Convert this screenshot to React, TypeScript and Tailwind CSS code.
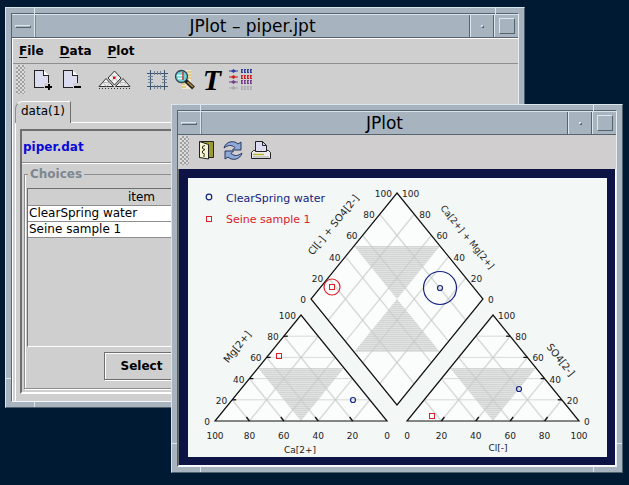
import type { ReactNode } from "react";

const LEVELS = [20, 40, 60, 80];
const SCALE = [0, 20, 40, 60, 80, 100];
const BLUE = "#14247e";
const RED = "#d9222c";

type Point = [number, number];

// point at t (0..1) between a and b
function mix(a: Point, b: Point, t: number): Point {
  return [a[0] + (b[0] - a[0]) * t, a[1] + (b[1] - a[1]) * t];
}

function Line({ from, to, ...rest }: { from: Point; to: Point; stroke?: string; strokeWidth?: number }) {
  return <line x1={from[0]} y1={from[1]} x2={to[0]} y2={to[1]} {...rest} />;
}

function Circle({ at, r, color }: { at: Point; r: number; color: string }) {
  return <circle cx={at[0]} cy={at[1]} r={r} fill="none" stroke={color} strokeWidth={1.2} />;
}

function Box({ at, color }: { at: Point; color: string }) {
  return <rect x={at[0] - 2.5} y={at[1] - 2.5} width={5} height={5} fill="none" stroke={color} />;
}

function Ternary({ left, side }: { left: Point; side: "left" | "right" }) {
  const right: Point = [left[0] + 172, left[1]];
  const apex: Point = [left[0] + 86, left[1] - 106];
  const outer = side === "left" ? left : right;
  const inner = side === "left" ? right : left;
  const dir = side === "left" ? 1 : -1;

  return (
    <g>
      <polygon points={`${left} ${right} ${apex}`} fill="#fbfcfc" />
      <polygon points={`${mix(left, apex, 0.5)} ${mix(right, apex, 0.5)} ${mix(left, right, 0.5)}`} fill="url(#hatch)" />
      <g stroke="#c9cbcb" strokeOpacity={0.7}>
        {LEVELS.map((level) => {
          const t = level / 100;
          return (
            <g key={level}>
              <Line from={mix(left, apex, t)} to={mix(right, apex, t)} />
              <Line from={mix(left, apex, t)} to={mix(left, right, t)} strokeWidth={1.5} />
              <Line from={mix(right, apex, t)} to={mix(right, left, t)} strokeWidth={1.5} />
            </g>
          );
        })}
      </g>
      <polygon points={`${left} ${right} ${apex}`} fill="none" stroke="#111" strokeWidth={1.2} />
      <g stroke="#111" strokeWidth={1.3}>
        {LEVELS.map((level) => {
          const edge = mix(outer, apex, level / 100);
          const base = mix(left, right, level / 100);
          return (
            <g key={level}>
              <Line from={edge} to={[edge[0] + 4 * dir, edge[1]]} />
              <Line from={base} to={[base[0] - 3 * dir, base[1] - 4]} />
            </g>
          );
        })}
      </g>
      {SCALE.map((level) => {
        const edge = mix(outer, apex, level / 100);
        const base = mix(inner, outer, level / 100);
        return (
          <g key={level}>
            <text x={edge[0] - 5 * dir} y={edge[1] + 4} textAnchor={side === "left" ? "end" : "start"}>
              {level}
            </text>
            <text x={base[0]} y={base[1] + 18} textAnchor="middle">
              {level}
            </text>
          </g>
        );
      })}
    </g>
  );
}

function Diamond() {
  const top: Point = [209, 15];
  const left: Point = [123, 121];
  const right: Point = [295, 121];
  const bottom: Point = [209, 227];

  return (
    <g>
      <polygon points={`${top} ${right} ${bottom} ${left}`} fill="#fbfcfc" />
      <polygon points="166,68 252,68 209,121" fill="url(#hatch)" />
      <polygon points="166,174 252,174 209,121" fill="url(#hatch)" />
      <g stroke="#c9cbcb" strokeOpacity={0.7} strokeWidth={1.5}>
        {LEVELS.map((level) => (
          <g key={level}>
            <Line from={mix(left, top, level / 100)} to={mix(bottom, right, level / 100)} />
            <Line from={mix(right, top, level / 100)} to={mix(bottom, left, level / 100)} />
          </g>
        ))}
      </g>
      <polygon points={`${top} ${right} ${bottom} ${left}`} fill="none" stroke="#111" strokeWidth={1.2} />
      {SCALE.map((level) => {
        const l = mix(left, top, level / 100);
        const r = mix(right, top, level / 100);
        return (
          <g key={level}>
            <text x={l[0] - 5} y={l[1] + 4} textAnchor="end">
              {level}
            </text>
            <text x={r[0] + 5} y={r[1] + 4}>
              {level}
            </text>
          </g>
        );
      })}
    </g>
  );
}

function PiperPlot() {
  return (
    <svg viewBox="0 0 419 279" className="h-full w-full text-[9px]" fill="#222" role="img" aria-label="Piper diagram">
      <defs>
        <pattern id="hatch" width="4" height="2" patternUnits="userSpaceOnUse">
          <rect width="4" height="2" fill="#e0e3e2" />
          <rect width="4" height="1" fill="#d2d5d4" />
        </pattern>
      </defs>
      <Diamond />
      <Ternary left={[27, 243]} side="left" />
      <Ternary left={[219, 243]} side="right" />

      <text x={112} y={275} textAnchor="middle">Ca[2+]</text>
      <text x={310} y={273} textAnchor="middle">Cl[-]</text>
      <g textAnchor="middle" className="text-[10px]">
        <text transform="translate(52 171) rotate(-51)">Mg[2+]</text>
        <text transform="translate(370 184) rotate(51)">SO4[2-]</text>
        <text transform="translate(148 49) rotate(-51)">Cl[-] + SO4[2-]</text>
      </g>
      <text transform="translate(277 61) rotate(51)" textAnchor="middle">Ca[2+] + Mg[2+]</text>

      <Circle at={[21, 19]} r={2.8} color={BLUE} />
      <text x={38} y={24} fill={BLUE} className="text-[11px]">ClearSpring water</text>
      <Box at={[21, 41]} color={RED} />
      <text x={38} y={45} fill={RED} className="text-[11px]">Seine sample 1</text>

      <Circle at={[252, 110]} r={16.5} color={BLUE} />
      <Circle at={[252, 110]} r={2.5} color={BLUE} />
      <Circle at={[165, 222]} r={2.5} color={BLUE} />
      <Circle at={[331, 211]} r={2.5} color={BLUE} />
      <Circle at={[144, 109]} r={8} color={RED} />
      <Box at={[144, 109]} color={RED} />
      <Box at={[91, 178]} color={RED} />
      <Box at={[244, 238]} color={RED} />
    </svg>
  );
}

function PageIcon({ sign }: { sign: "plus" | "minus" }) {
  return (
    <svg viewBox="0 0 20 22" className="h-[22px] w-5" shapeRendering="crispEdges">
      <path d="M1.500 1.500H10.500L15.500 6.500V18.500H1.500Z" fill="#dcdcf0" stroke="#222" />
      <path d="M10.500 1.500V6.500H15.500" fill="#fff" stroke="#222" />
      <path d="M11 14h8v7h-8z" fill="#cfcfcf" />
      <path d="M12 17h7v2h-7z" fill="#000" />
      {sign === "plus" && <path d="M14.500 15h2v6h-2z" fill="#000" />}
    </svg>
  );
}

function PiperIcon() {
  return (
    <svg viewBox="0 0 33 20" className="h-5 w-[33px]" fill="#eee" stroke="#333">
      <path d="M16.500 1L23 8L16.500 15L10 8Z" />
      <path d="M1 16.500L8 8.500L15.500 16.500Z" />
      <path d="M17.500 16.500L25 8.500L32 16.500Z" />
      <path d="M13 4.500L20 11.500M20 4.500L13 11.500M5 12.500H12L8.500 16.500ZM21.500 12.500H28.500L25 16.500Z" fill="none" stroke="#999" strokeWidth="0.6" />
      <path d="M1 18.500H32" strokeDasharray="1 2" />
      <path d="M15 6.500h2.500v2.500h-2.500z" fill="#d11" stroke="none" />
    </svg>
  );
}

function GridIcon() {
  return (
    <svg viewBox="0 0 21 22" className="h-[22px] w-[21px]" fill="none" stroke="#3c5470" shapeRendering="crispEdges">
      <path d="M3.500 1V21M17.500 1V21M0 4.500H21M0 17.500H21" />
      <path d="M1 7.500H6M1 10.500H6M1 13.500H6M15 7.500H20M15 10.500H20M15 13.500H20M7.500 2V6M10.500 2V6M13.500 2V6M7.500 16V20M10.500 16V20M13.500 16V20" stroke="#6d8096" />
    </svg>
  );
}

function ZoomIcon() {
  return (
    <svg viewBox="0 0 22 22" className="h-[22px] w-[22px]">
      <path d="M8 1H17V20H8Z" fill="#f0ead2" />
      <path d="M13 3H17M14 6H17M14 9H17M8 15H11M8 18H12" stroke="#cba83a" />
      <circle cx="7.500" cy="7.500" r="6" fill="#6fd3d6" stroke="#345" strokeWidth="1.300" />
      <path d="M3 6.500H10M4 9.500H8" stroke="#e8ffff" strokeWidth="1.500" />
      <path d="M9 3V11" stroke="#c03a3a" strokeWidth="1.500" />
      <path d="M11.500 11.500L19.500 19" stroke="#222" strokeWidth="4" />
      <path d="M13.500 13L19 18" stroke="#b9893c" strokeWidth="1.500" />
    </svg>
  );
}

function SeriesIcon() {
  const rows = [
    { y: 3, color: "#2c3fa0" },
    { y: 9, color: "#d32020" },
    { y: 14, color: "#74408c" },
    { y: 20, color: "#aaa9b4" },
  ];
  return (
    <svg viewBox="0 0 26 23" className="h-[23px] w-[26px]">
      {rows.map((row) => (
        <g key={row.y} fill={row.color} stroke={row.color}>
          <path d={`M1 ${row.y}H10`} />
          <path d={`M5.500 ${row.y - 2}L8 ${row.y}L5.500 ${row.y + 2}L3 ${row.y}Z`} stroke="none" />
          <path d={`M13 ${row.y}H25`} strokeWidth="4" strokeDasharray="2 1" />
          <path d={`M14 ${row.y}H25`} stroke="#cfcfcf" strokeDasharray="1 2" />
        </g>
      ))}
    </svg>
  );
}

function CloseIcon() {
  return (
    <svg viewBox="0 0 17 20" className="h-5 w-[17px]" stroke="#222">
      <path d="M1.500 1.500H15.500V17.500H1.500Z" fill="#9a9a30" />
      <path d="M1.500 1.500L10.500 4.500V19L1.500 17.500Z" fill="#f6f5cf" />
      <path d="M7 5.500L4.500 6.500V8.500L7 9.500L4.500 11V13L7 14.500M5 16H7" fill="none" />
    </svg>
  );
}

function RefreshIcon() {
  const arrow = "M2 8C4 1 12 0 16 4L19 2V10H10.500L13 7.500C9 4.500 6 5 2 8Z";
  return (
    <svg viewBox="0 0 22 21" className="h-[21px] w-[22px]" fill="#8ea8d8" stroke="#26365e">
      <path d={arrow} />
      <path d={arrow} transform="rotate(180 11 10.500)" />
    </svg>
  );
}

function PrintIcon() {
  return (
    <svg viewBox="0 0 20 20" className="h-5 w-5" stroke="#222">
      <path d="M4.500 11.500V1.500H11.500L15.500 5.500V11.500Z" fill="#dcdcf2" />
      <path d="M11.500 1.500V5.500H15.500" fill="none" />
      <path d="M2.500 10.500H4.500V11.500H15.500V10.500H17.500L19.500 12.500V18.500H0.500V12.500Z" fill="#ececec" />
      <path d="M2 14.500H13" stroke="#b8b62c" strokeWidth="1.500" />
      <path d="M2 17H18" stroke="#aaa" />
    </svg>
  );
}

function ToolButton({ label, children }: { label: string; children: ReactNode }) {
  return (
    <button type="button" aria-label={label} className="flex items-center justify-center">
      {children}
    </button>
  );
}

function Grip() {
  return <span className="mr-2 h-[29px] w-[9px] bg-[repeating-conic-gradient(#a0a0a0_0_25%,#dcdcdc_0_50%)] bg-[length:4px_4px]" />;
}

function DesktopWindow({ title, className, children }: { title: string; className: string; children: ReactNode }) {
  return (
    <section className={`absolute flex border border-t-[#d6e6ec] border-r-[#4d606c] border-b-[#4d606c] border-l-[#d6e6ec] bg-[#a7b4c0] p-[5px] ${className}`}>
      <span className="absolute top-0 left-[28px] h-[6px] w-px bg-[#dbe9ee]" />
      <span className="absolute top-0 right-[28px] h-[6px] w-px bg-[#dbe9ee]" />
      <span className="absolute bottom-0 left-[28px] h-[5px] w-px bg-[#dbe9ee]" />
      <span className="absolute right-[28px] bottom-0 h-[5px] w-px bg-[#dbe9ee]" />
      <span className="absolute bottom-[28px] left-0 h-px w-[5px] bg-[#dbe9ee]" />
      <span className="absolute right-0 bottom-[28px] h-px w-[5px] bg-[#dbe9ee]" />
      <div className="flex min-w-0 flex-1 flex-col border border-t-[#56646f] border-r-[#e6eef2] border-b-[#f4f8fa] border-l-[#56646f]">
        <header className="flex h-6 shrink-0 items-stretch border-t border-b border-t-[#d6e6ec] border-b-[#56646f]">
          <button type="button" aria-label="Window menu" className="flex w-[23px] items-center justify-center border-r border-r-[#dbe9ee]">
            <span className="h-[3px] w-4 border border-t-[#dbe9ee] border-r-[#56646f] border-b-[#56646f] border-l-[#dbe9ee]" />
          </button>
          <h1 className="flex flex-1 items-center justify-center border-r border-l border-r-[#56646f] border-l-[#7b8995] text-[17px] leading-5 text-black">{title}</h1>
          <button type="button" aria-label="Minimize" className="flex w-6 items-center justify-center border-r border-l border-r-[#56646f] border-l-[#dbe9ee]">
            <span className="h-[3px] w-[3px] border border-t-[#dbe9ee] border-r-[#56646f] border-b-[#56646f] border-l-[#dbe9ee]" />
          </button>
          <button type="button" aria-label="Maximize" className="flex w-6 items-center justify-center border-l border-l-[#dbe9ee]">
            <span className="h-4 w-4 border border-t-[#dbe9ee] border-r-[#56646f] border-b-[#56646f] border-l-[#dbe9ee]" />
          </button>
        </header>
        {children}
      </div>
    </section>
  );
}

function MainWindow() {
  const items = ["ClearSpring water", "Seine sample 1"];

  return (
    <DesktopWindow title="JPlot – piper.jpt" className="top-[7px] right-[104px] bottom-[77px] left-[5px]">
      <div className="flex min-h-0 flex-1 flex-col border-t border-l border-white bg-[#cfcfcf]">
        <nav className="flex h-[25px] shrink-0 items-center gap-4 border-b border-[#8e8e8e] px-[6px] text-xs font-bold">
          {["File", "Data", "Plot"].map((name) => (
            <button key={name} type="button" className="leading-4">
              <span className="underline underline-offset-2">{name[0]}</span>
              {name.slice(1)}
            </button>
          ))}
        </nav>
        <div className="flex h-[35px] shrink-0 items-center px-[3px] pb-1">
          <Grip />
          <div className="flex items-center gap-[9px]">
            <ToolButton label="Add data"><PageIcon sign="plus" /></ToolButton>
            <ToolButton label="Remove data"><PageIcon sign="minus" /></ToolButton>
          </div>
          <div className="mr-4 ml-4 flex">
            <ToolButton label="Piper plot"><PiperIcon /></ToolButton>
          </div>
          <div className="flex items-center gap-[6px]">
            <ToolButton label="Axes"><GridIcon /></ToolButton>
            <ToolButton label="Zoom"><ZoomIcon /></ToolButton>
            <ToolButton label="Text">
              <span className="w-5 font-['Liberation_Serif',serif] text-[30px] leading-6 font-bold italic">T</span>
            </ToolButton>
            <ToolButton label="Series"><SeriesIcon /></ToolButton>
          </div>
        </div>

        <div className="mt-[2px] flex shrink-0 items-end pl-[2px]">
          <button type="button" className="h-[22px] rounded-tl-lg border-t border-r border-l border-t-white border-r-[#6e6e6e] border-l-[#8e8e8e] px-[5px] pb-1 text-xs leading-4">
            data(1)
          </button>
          <span className="h-px flex-1 bg-white" />
        </div>

        <div className="ml-[2px] flex min-h-0 flex-1 border-l border-white pt-[6px] pr-[5px] pb-[7px] pl-1">
          <div className="flex flex-1 border-2 border-t-[#6e6e6e] border-r-white border-b-white border-l-[#6e6e6e]">
            <div className="flex w-[240px] flex-col border-r border-[#8e8e8e]">
              <p className="flex h-[33px] shrink-0 items-center border-b border-white pl-px text-xs font-bold text-[#0a0ad8] shadow-[inset_0_-1px_#8e8e8e]">piper.dat</p>
              <fieldset className="mx-[2px] mt-[3px] mb-[3px] flex min-h-0 min-w-0 flex-1 flex-col items-stretch border border-[#8e8e8e] px-[2px] pb-2 shadow-[1px_1px_#fff,inset_1px_0_#fff]">
                <legend className="ml-px px-[2px] text-xs leading-[14px] font-bold text-[#7c8790]">Choices</legend>
                <div className="mt-[7px] flex-1 border border-t-[#6e6e6e] border-r-white border-b-white border-l-[#6e6e6e]">
                  <table className="w-full border-collapse text-left text-xs leading-[15px]">
                    <thead>
                      <tr>
                        <th className="border-b border-[#8e8e8e] p-0 pt-px text-center font-normal">item</th>
                      </tr>
                    </thead>
                    <tbody className="bg-white">
                      {items.map((item) => (
                        <tr key={item}>
                          <td className="border-b border-[#8e8e8e] p-0 pl-px">{item}</td>
                        </tr>
                      ))}
                    </tbody>
                  </table>
                </div>
                <button type="button" className="mt-[5px] h-7 self-center border border-[#6e6e6e] px-4 text-xs font-bold shadow-[inset_1px_1px_#fff,1px_1px_#fff]">
                  Select
                </button>
              </fieldset>
            </div>
          </div>
        </div>
      </div>
    </DesktopWindow>
  );
}

function PlotWindow() {
  return (
    <DesktopWindow title="JPlot" className="top-[104px] right-[6px] bottom-[12px] left-[171px]">
      <div className="flex h-[34px] shrink-0 items-center bg-[#d0cecf] px-[2px] pb-1">
        <Grip />
        <div className="ml-px flex items-center gap-[7px]">
          <ToolButton label="Close"><CloseIcon /></ToolButton>
          <ToolButton label="Refresh"><RefreshIcon /></ToolButton>
          <ToolButton label="Print"><PrintIcon /></ToolButton>
        </div>
      </div>
      <div className="flex min-h-0 flex-1 border-r border-b border-l border-r-white border-b-white border-l-[#6e6e6e] bg-[#0d1445] pt-[9px] pr-2 pb-2 pl-[9px]">
        <div className="min-h-0 min-w-0 flex-1 bg-[#f3f7f6]">
          <PiperPlot />
        </div>
      </div>
    </DesktopWindow>
  );
}

export default function App() {
  return (
    <main className="relative h-screen overflow-hidden bg-[#001a33] font-['DejaVu_Sans','Noto_Sans',sans-serif] text-black">
      <MainWindow />
      <PlotWindow />
    </main>
  );
}
